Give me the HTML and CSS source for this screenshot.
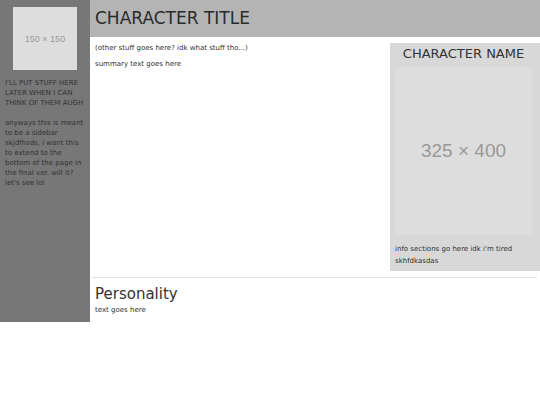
FILE: index.html
```html
<!DOCTYPE html>
<html lang="en">
  <head>
    <meta charset="UTF-8" />
    <title>Character Title</title>
    <link rel="stylesheet" href="styles.css">
  </head>

  <body>
    <div class="page">
      <div class="sidebar">
        <div class="placeholder side-pic">150 × 150</div>
        <p>I'LL PUT STUFF HERE LATER WHEN I CAN THINK OF THEM AUGH</p>
        <p>anyways this is meant to be a sidebar skjdfhsds, i want this to extend to the bottom of the page in the final ver. will it? let's see lol</p>
      </div>

      <div class="main">
        <div class="header">
          <h1>CHARACTER TITLE</h1>
        </div>

        <div class="top">
          <div class="summary">
            <p>(other stuff goes here? idk what stuff tho...)</p>
            <p>summary text goes here</p>
          </div>

          <div class="infobox">
            <h2>CHARACTER NAME</h2>
            <div class="placeholder char-pic">325 × 400</div>
            <p>info sections go here idk i'm tired skhfdkasdas</p>
          </div>
        </div>

        <hr>

        <div class="section">
          <h3>Personality</h3>
          <p>text goes here</p>
        </div>
      </div>
    </div>
  </body>
</html>
```

FILE: styles.css
```css
body {
  margin: 0;
  font-family: "DejaVu Sans", Verdana, sans-serif;
  font-size: 7px;
  color: #333;
  background-color: white;
}

p {
  margin: 0;
}

.page {
  display: flex;
  align-items: stretch;
}

.sidebar {
  width: 80px;
  flex-shrink: 0;
  padding: 7px 5px;
  background-color: #777;
  line-height: 10px;
}

.sidebar p {
  margin-bottom: 10px;
}

.placeholder {
  display: flex;
  align-items: center;
  justify-content: center;
  background-color: #dddddd;
  color: #999;
  font-family: "Liberation Sans", Arial, sans-serif;
}

.side-pic {
  width: 64px;
  height: 63px;
  margin: 0 auto 8px;
  font-size: 9px;
}

.main {
  flex: 1;
  display: flex;
  flex-direction: column;
}

.header {
  height: 37px;
  padding: 0 5px;
  background-color: #b4b4b4;
  display: flex;
  align-items: center;
}

h1 {
  margin: 0 0 1px;
  font-size: 17px;
  font-weight: normal;
  color: #2a2a2a;
}

.top {
  display: flex;
  gap: 10px;
  padding: 6px 0 0 5px;
}

.summary {
  flex: 1;
  padding-top: 1px;
}

.summary p {
  margin-bottom: 8px;
}

.infobox {
  width: 137px;
  padding: 3px 8px 4px 5px;
  background-color: #d8d8d8;
  line-height: 12px;
}

.infobox h2 {
  margin: 0 0 5px;
  font-size: 13px;
  font-weight: normal;
  text-align: center;
  line-height: 16px;
}

.char-pic {
  height: 168px;
  margin-bottom: 8px;
  font-size: 19px;
}

hr {
  margin: 6px 3px 0 2px;
  border: none;
  border-top: 1px solid #e3e3e3;
}

.section {
  padding: 7px 5px 8px;
}

.section h3 {
  margin: 0 0 3px;
  font-size: 15px;
  font-weight: normal;
  line-height: 18px;
}
```
